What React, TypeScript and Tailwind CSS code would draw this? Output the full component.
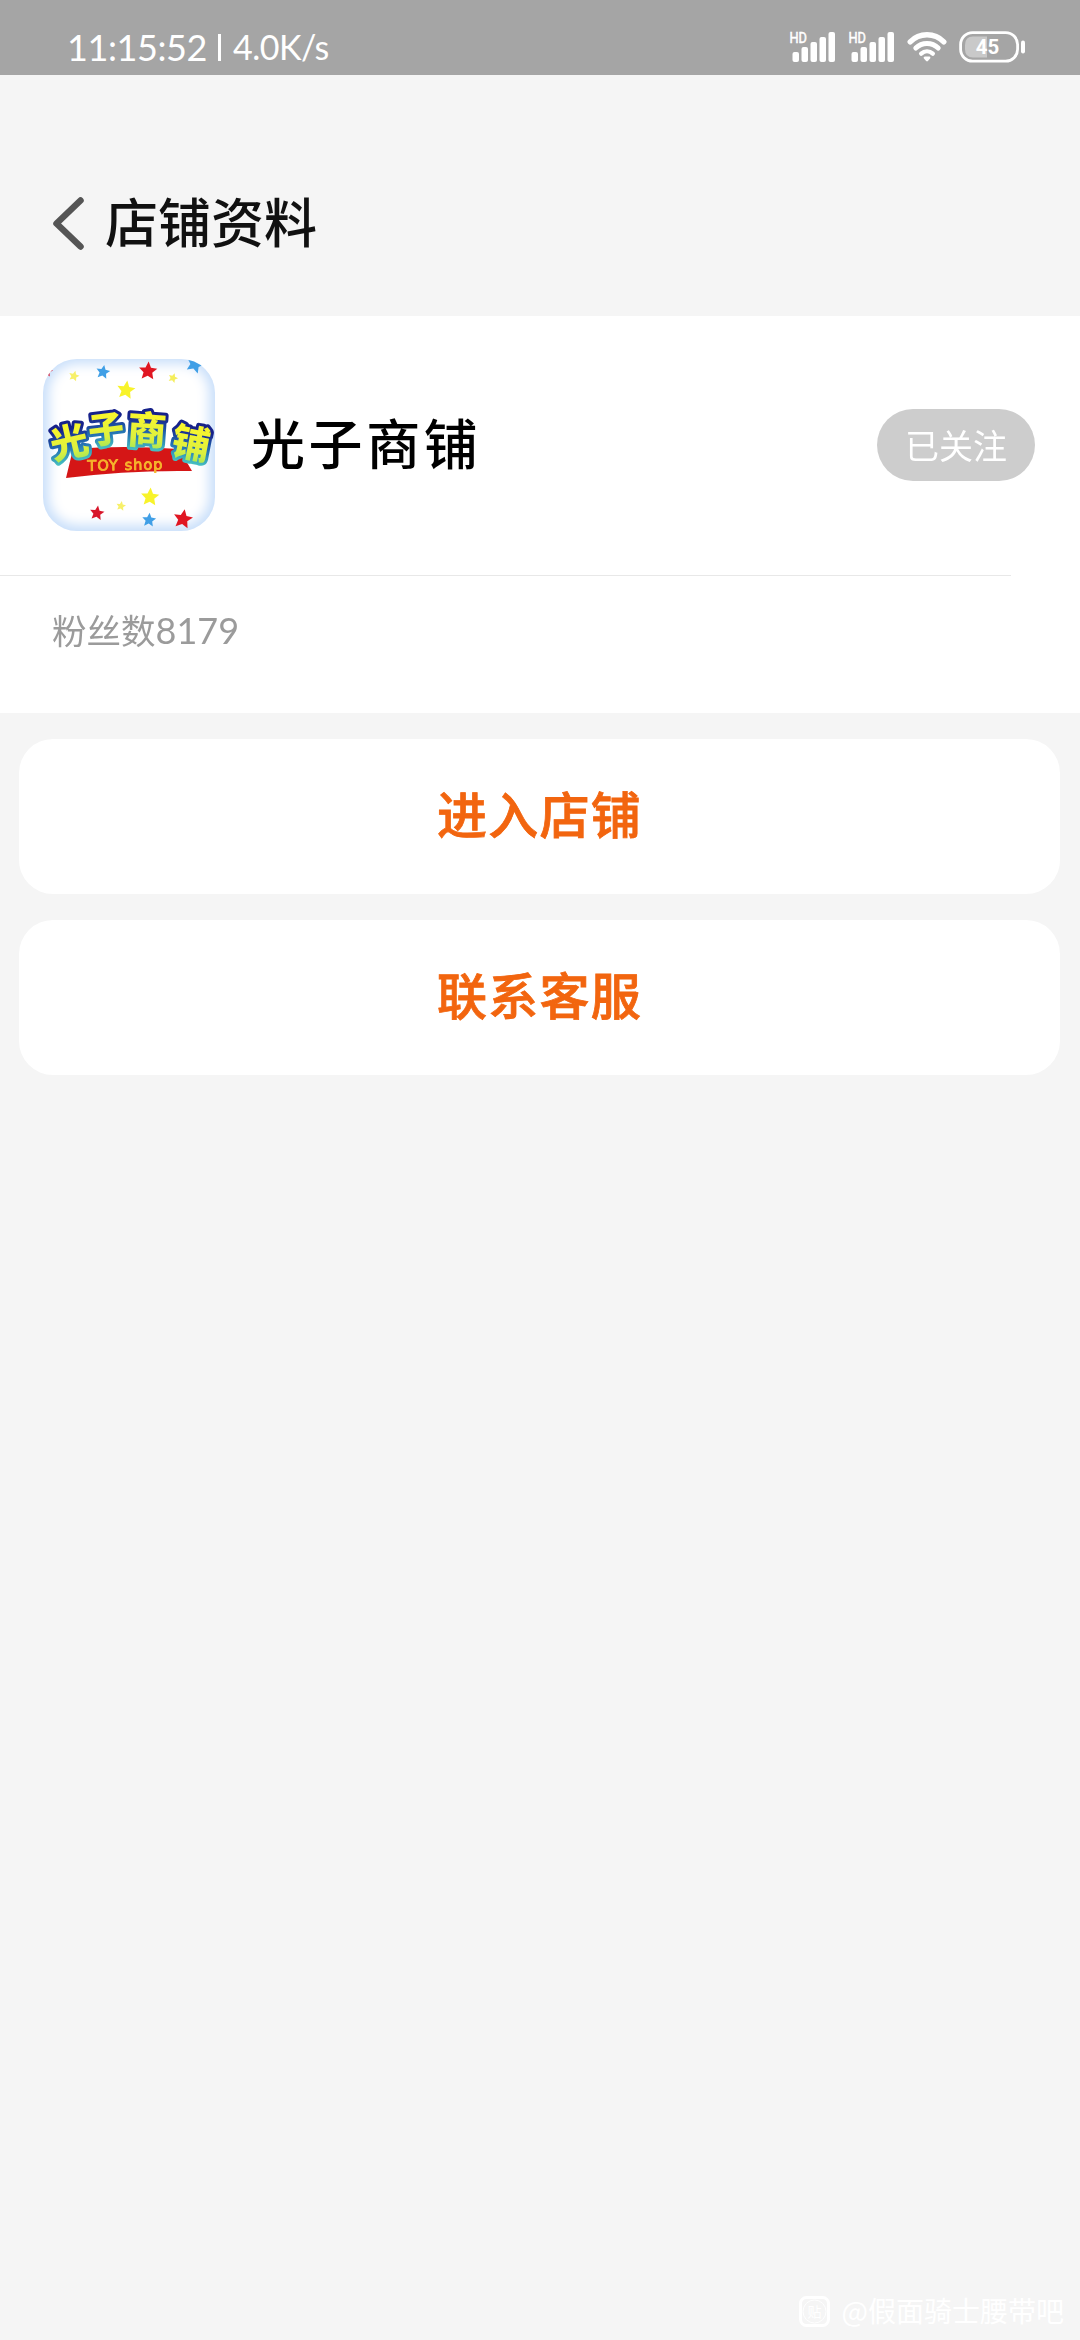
import type { ReactNode } from "react";

const STAR = "M0-10 2.9-3.6 9.6-3.1 4.6 1.6 6.1 8.4 0 5-6.1 8.4-4.6 1.6-9.6-3.1-2.9-3.6Z";

const stars: [number, number, number, number, string][] = [
  [60, 13, 0.72, 10, "#3f9fe6"],
  [105, 12, 0.95, 4, "#e01822"],
  [31, 17, 0.55, 15, "#f7f06a"],
  [83, 31, 0.95, 8, "#f8f32c"],
  [130, 19, 0.5, 20, "#f5ee5c"],
  [152, 5, 0.95, 20, "#3f9fe6"],
  [4, 12, 0.6, 10, "#d81e35"],
  [107, 138, 0.95, 4, "#f8f32c"],
  [78, 147, 0.5, 10, "#f7f06a"],
  [54, 154, 0.75, 8, "#d8152b"],
  [106, 161, 0.72, 5, "#3f9fe6"],
  [140, 160, 1, 10, "#e01822"],
];

const logoChars: [string, number, number, number, number][] = [
  ["光", 26, 83, -13, 38],
  ["子", 63, 70, -7, 36],
  ["商", 104, 71, 4, 39],
  ["铺", 148, 84, 11, 38],
];

function ShopLogo() {
  return (
    <svg className="block h-[172px] w-[172px]" viewBox="0 0 172 172">
      <defs>
        <clipPath id="logo-clip">
          <rect width="172" height="172" rx="34" />
        </clipPath>
        <filter id="edge-glow" x="-20%" y="-20%" width="140%" height="140%">
          <feGaussianBlur stdDeviation="6" />
        </filter>
        <filter id="soft" x="-5%" y="-5%" width="110%" height="110%">
          <feGaussianBlur stdDeviation="0.7" />
        </filter>
        <linearGradient id="letters" x1="0" y1="0" x2="0" y2="1">
          <stop offset="0.3" stopColor="#f6f52e" />
          <stop offset="0.7" stopColor="#dcf03f" />
          <stop offset="1" stopColor="#8be263" />
        </linearGradient>
        <linearGradient id="outline" x1="0" y1="0" x2="0" y2="1">
          <stop offset="0.3" stopColor="#17208a" />
          <stop offset="0.65" stopColor="#2575b4" />
          <stop offset="0.9" stopColor="#45bcc0" />
        </linearGradient>
      </defs>
      <g clipPath="url(#logo-clip)">
        <rect width="172" height="172" fill="#c9dffa" />
        <rect x="6" y="5" width="160" height="161" rx="28" fill="#fff" filter="url(#edge-glow)" />
        <g filter="url(#soft)">
          {stars.map(([x, y, s, r, c], i) => (
            <path key={i} d={STAR} fill={c} transform={`translate(${x} ${y}) rotate(${r}) scale(${s})`} />
          ))}
          <path d="M30 90Q80 86 136 90L149 112Q85 111 23 119Z" fill="#d51519" />
          {logoChars.map(([ch, x, y, r, size]) => (
            <text
              key={ch}
              transform={`translate(${x} ${y}) rotate(${r})`}
              y={size * 0.37}
              fontSize={size}
              textAnchor="middle"
              fill="url(#letters)"
              stroke="url(#outline)"
              strokeWidth="6"
              strokeLinejoin="round"
              paintOrder="stroke"
              className="font-['Noto_Sans_CJK_SC',sans-serif] font-black"
            >
              {ch}
            </text>
          ))}
          <text
            x="82"
            y="111"
            fontSize="14.5"
            textAnchor="middle"
            textLength="75"
            transform="rotate(-1 82 106)"
            fill="#f6b62c"
            stroke="#f6b62c"
            strokeWidth="0.9"
            className="font-['DejaVu_Sans',sans-serif]"
          >
            TOY shop
          </text>
        </g>
      </g>
    </svg>
  );
}

function Signal() {
  return (
    <svg className="block h-[32px] w-[48px] overflow-visible" viewBox="0 0 48 32" fill="#fff">
      <text x="0.5" y="12" fontSize="14.5" textLength="17.5" lengthAdjust="spacingAndGlyphs" stroke="#fff" strokeWidth="0.5" className="font-['Roboto',sans-serif]">
        HD
      </text>
      <rect x="3.5" y="21" width="6.5" height="10" rx="2" />
      <rect x="12.5" y="16" width="6.5" height="15" rx="2" />
      <rect x="21.5" y="11" width="6.5" height="20" rx="2" />
      <rect x="30.5" y="6" width="6.5" height="25" rx="2" />
      <rect x="39.5" y="1" width="6.5" height="30" rx="2" />
    </svg>
  );
}

function Wifi() {
  return (
    <svg className="block h-[32px] w-[40px]" viewBox="0 0 40 32" fill="none" stroke="#fff" strokeLinecap="round">
      <path d="M3.2 10.8C12.5 1.4 27.5 1.4 36.8 10.8" strokeWidth="5.4" />
      <path d="M8.8 17C15 11 25 11 31.2 17" strokeWidth="5" />
      <path d="M14.2 22.6C17.6 19.6 22.4 19.6 25.8 22.6" strokeWidth="4.4" />
      <path d="M17.8 26.8H22.2L20 29.2Z" strokeWidth="2.4" strokeLinejoin="round" fill="#fff" />
    </svg>
  );
}

function Battery() {
  return (
    <svg className="block h-[32px] w-[67px]" viewBox="0 0 67 32">
      <rect x="1.6" y="1.6" width="57" height="28.6" rx="12" fill="none" stroke="#fff" strokeWidth="2.8" />
      <path d="M14 5.5H28V26.5H14Q6 26.5 6 18V14Q6 5.5 14 5.5Z" fill="#c9c9c9" />
      <text x="28.5" y="23.2" fontSize="21" textAnchor="middle" textLength="23.5" lengthAdjust="spacingAndGlyphs" fill="#fff" className="font-['Roboto',sans-serif] font-bold">
        45
      </text>
      <rect x="62" y="9.5" width="4" height="13" rx="2" fill="#fff" />
    </svg>
  );
}

function ActionButton({ children }: { children: ReactNode }) {
  return (
    <button className="flex h-[155px] w-full items-center justify-center rounded-[34px] bg-white pb-[9px] text-[50px] leading-none font-medium tracking-[1.3px] text-[#f2650f] [-webkit-text-stroke:0.8px_#f2650f]">
      {children}
    </button>
  );
}

export default function App() {
  return (
    <div className="relative flex h-[2340px] w-[1080px] flex-col overflow-hidden bg-[#f5f5f5] font-['Noto_Sans_CJK_SC',sans-serif]">
      <div className="flex h-[75px] shrink-0 items-start bg-[#a5a5a5] pt-[31px] pl-[67px] text-white">
        <div className="flex h-[32px] w-[722px] items-center font-['Lato',sans-serif] leading-none">
          <span className="w-[151px] text-[36px] tracking-[-0.4px]">11:15:52</span>
          <span className="h-[27px] w-[3px] bg-white" />
          <span className="ml-[12px] text-[34px] tracking-[-0.5px]">4.0K/s</span>
        </div>
        <Signal />
        <div className="ml-[11px]"><Signal /></div>
        <div className="ml-[11px]"><Wifi /></div>
        <div className="ml-[12px]"><Battery /></div>
      </div>

      <header className="flex h-[241px] shrink-0 items-start pt-[119px] pl-[52px]">
        <svg className="mt-px block h-[56px] w-[34px] shrink-0" viewBox="0 0 34 56" fill="none" stroke="#555" strokeWidth="6.5" strokeLinecap="round" strokeLinejoin="round">
          <path d="M28.5 5.5 4.5 28.5 28.5 51.5" />
        </svg>
        <h1 className="ml-[19px] text-[53px] leading-none font-medium text-[#111]">店铺资料</h1>
      </header>

      <section className="h-[397px] shrink-0 bg-white">
        <div className="flex h-[260px] w-full items-start pt-[43px] pl-[43px]">
          <ShopLogo />
          <div className="ml-[36px] flex h-[172px] items-center">
            <h2 className="w-[626px] pb-[7px] text-[54px] leading-none font-medium tracking-[3.6px] text-black">光子商铺</h2>
            <button className="flex h-[72px] w-[158px] items-center justify-center rounded-full bg-[#cdcdcd] text-[34px] leading-none font-normal text-white">
              已关注
            </button>
          </div>
        </div>
        <div className="-mt-[1px] h-px w-[1011px] bg-[#e8e8e8]" />
        <p className="flex items-baseline pt-[36px] pl-[52px] text-[34.5px] leading-none text-[#9b9b9b]">
          粉丝数<span className="font-['Lato',sans-serif] text-[36px] leading-none">8179</span>
        </p>
      </section>

      <div className="mt-[26px] flex flex-col gap-[26px] pr-[20px] pl-[19px]">
        <ActionButton>进入店铺</ActionButton>
        <ActionButton>联系客服</ActionButton>
      </div>

      <div className="absolute right-[16px] bottom-[13px] flex h-[32px] items-center text-white">
        <svg className="block h-[31px] w-[31px]" viewBox="0 0 31 31">
          <rect x="1.5" y="1.5" width="28" height="28" rx="6" fill="none" stroke="#fff" strokeWidth="3" />
          <circle cx="15.5" cy="15.5" r="11.5" fill="none" stroke="#fff" strokeWidth="1" />
          <text x="15.5" y="21" fontSize="14" textAnchor="middle" fill="#fff" className="font-['Noto_Sans_CJK_SC',sans-serif]">贴</text>
        </svg>
        <span className="ml-[12px] pb-[2px] text-[28px] leading-none whitespace-nowrap">@假面骑士腰带吧</span>
      </div>
    </div>
  );
}
